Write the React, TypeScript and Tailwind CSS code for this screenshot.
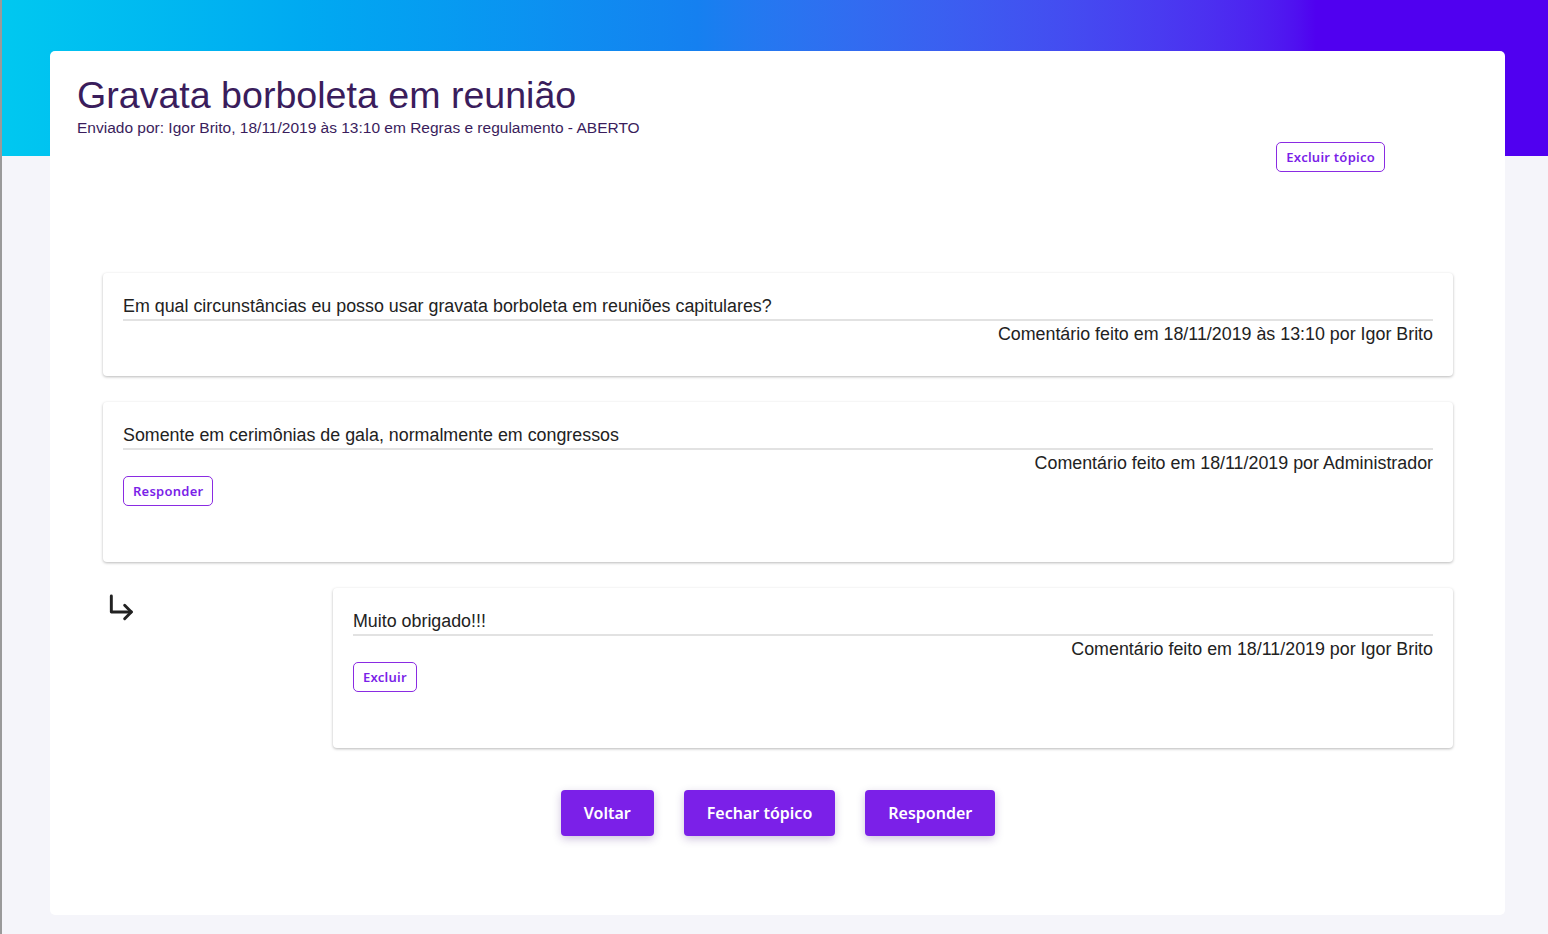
import React from "react";

function Outline({ children }: { children: React.ReactNode }) {
  return (
    <button className="h-[30px] px-[9px] rounded-[5px] border border-[#8a2be2] text-[#7b1fe8] text-[13px] tracking-[0.25px] font-semibold bg-white font-['Noto_Sans',sans-serif] leading-none">
      {children}
    </button>
  );
}

function Solid({ children }: { children: React.ReactNode }) {
  return (
    <button className="h-[46px] px-[23px] rounded-[4px] bg-[#7b20e8] text-white text-[16px] font-semibold font-['Noto_Sans',sans-serif] shadow-[0_3px_8px_rgba(60,20,120,0.25)]">
      {children}
    </button>
  );
}

function Comment({
  text,
  meta,
  action,
  className,
}: {
  text: string;
  meta: string;
  action?: React.ReactNode;
  className?: string;
}) {
  return (
    <div
      className={
        "bg-white rounded-[4px] shadow-[0_1px_3px_rgba(0,0,0,0.28)] px-[20px] pt-[21px] font-['Liberation_Sans',Arial,sans-serif] text-[#222] " +
        (className ?? "")
      }
    >
      <div className="text-[17.85px] leading-[24px] border-b-2 border-[#e2e2e2] pb-[1px]">{text}</div>
      <div className="text-[17.85px] leading-[24px] text-right mt-[1px]">{meta}</div>
      {action && <div className="mt-[1px]">{action}</div>}
    </div>
  );
}

export default function App() {
  return (
    <div className="min-h-[934px] bg-[#f5f5fa] border-l-2 border-[#9a9a9a]">
      <div className="h-[156px] bg-gradient-to-r from-[#00c8f0] via-[#1580f0] via-45% to-[#5000f0] to-85%" />
      <div className="relative mt-[-105px] mx-[48px] mr-[43px] h-[864px] bg-white rounded-[5px] pt-[22px] px-[27px]">
        <h1 className="text-[37.6px] leading-[44px] text-[#3a1d5c] font-['Liberation_Sans',Arial,sans-serif]">
          Gravata borboleta em reunião
        </h1>
        <p className="text-[15.5px] leading-[18px] text-[#3a1d5c] font-['Liberation_Sans',Arial,sans-serif] mt-[2px]">
          Enviado por: Igor Brito, 18/11/2019 às 13:10 em Regras e regulamento - ABERTO
        </p>
        <div className="flex justify-end pr-[93px] mt-[5px]">
          <Outline>Excluir tópico</Outline>
        </div>
        <div className="ml-[26px] mr-[25px] mt-[101px] flex flex-col gap-[26px]">
          <Comment
            className="h-[103px]"
            text="Em qual circunstâncias eu posso usar gravata borboleta em reuniões capitulares?"
            meta="Comentário feito em 18/11/2019 às 13:10 por Igor Brito"
          />
          <Comment
            className="h-[160px]"
            text="Somente em cerimônias de gala, normalmente em congressos"
            meta="Comentário feito em 18/11/2019 por Administrador"
            action={<Outline>Responder</Outline>}
          />
          <div className="flex">
            <div className="w-[230px] pt-[4px] pl-[3px]">
              <svg width="32" height="32" viewBox="0 0 24 24" fill="none" stroke="#222" strokeWidth="2.2" strokeLinecap="round" strokeLinejoin="round">
                <path d="M4 3v12h15" />
                <path d="M14 10l5 5-5 5" />
              </svg>
            </div>
            <Comment
              className="flex-1 h-[160px]"
              text="Muito obrigado!!!"
              meta="Comentário feito em 18/11/2019 por Igor Brito"
              action={<Outline>Excluir</Outline>}
            />
          </div>
        </div>
        <div className="flex justify-center gap-[30px] mt-[42px] pl-[1px]">
          <Solid>Voltar</Solid>
          <Solid>Fechar tópico</Solid>
          <Solid>Responder</Solid>
        </div>
      </div>
    </div>
  );
}
